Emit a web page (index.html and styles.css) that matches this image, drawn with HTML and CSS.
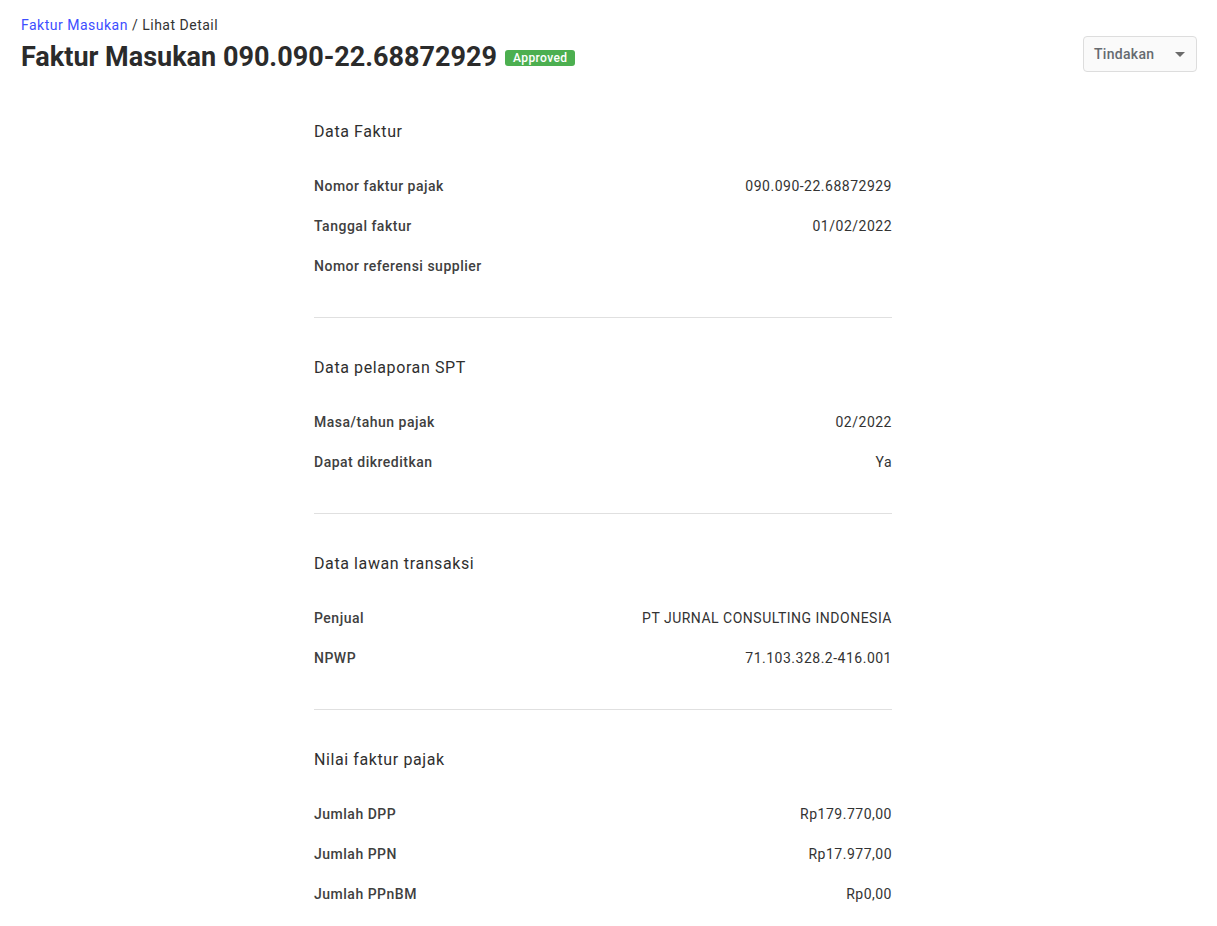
FILE: index.html
```html
<!DOCTYPE html>
<html lang="id">
<head>
    <meta charset="UTF-8">
    <title>Faktur Masukan - Lihat Detail</title>
    <link rel="stylesheet" href="styles.css">
</head>
<body>
<header class="page-header">
    <div class="heading">
        <div class="breadcrumb"><a href="#">Faktur Masukan</a> / Lihat Detail</div>
        <h1>Faktur Masukan 090.090-22.68872929 <span class="badge">Approved</span></h1>
    </div>
    <button type="button" class="action-btn">Tindakan <span class="caret"></span></button>
</header>

<main class="detail">
    <section class="section">
        <h2>Data Faktur</h2>
        <div class="row"><span class="label">Nomor faktur pajak</span><span class="value">090.090-22.68872929</span></div>
        <div class="row"><span class="label">Tanggal faktur</span><span class="value">01/02/2022</span></div>
        <div class="row"><span class="label">Nomor referensi supplier</span><span class="value"></span></div>
    </section>

    <section class="section">
        <h2>Data pelaporan SPT</h2>
        <div class="row"><span class="label">Masa/tahun pajak</span><span class="value">02/2022</span></div>
        <div class="row"><span class="label">Dapat dikreditkan</span><span class="value">Ya</span></div>
    </section>

    <section class="section">
        <h2>Data lawan transaksi</h2>
        <div class="row"><span class="label">Penjual</span><span class="value">PT JURNAL CONSULTING INDONESIA</span></div>
        <div class="row"><span class="label">NPWP</span><span class="value">71.103.328.2-416.001</span></div>
    </section>

    <section class="section last">
        <h2>Nilai faktur pajak</h2>
        <div class="row"><span class="label">Jumlah DPP</span><span class="value">Rp179.770,00</span></div>
        <div class="row"><span class="label">Jumlah PPN</span><span class="value">Rp17.977,00</span></div>
        <div class="row"><span class="label">Jumlah PPnBM</span><span class="value">Rp0,00</span></div>
    </section>
</main>
</body>
</html>
```

FILE: styles.css
```css
body {
    font-family: Roboto, 'Noto Sans', sans-serif;
    background-color: #ffffff;
    color: #333333;
    margin: 0;
    padding: 0;
}

.page-header {
    display: flex;
    justify-content: space-between;
    align-items: flex-start;
    padding: 15px 20px 0 21px;
}

.breadcrumb {
    font-size: 14px;
    line-height: 20px;
    letter-spacing: 0.5px;
    color: #333333;
}

.breadcrumb a {
    color: #3d4eff;
    text-decoration: none;
}

h1 {
    margin: 5px 0 0;
    font-size: 27px;
    line-height: 34px;
    font-weight: 700;
    color: #2b2b2b;
    display: flex;
    align-items: center;
    gap: 8px;
}

.badge {
    background-color: #4caf50;
    color: #ffffff;
    font-size: 12px;
    font-weight: 500;
    line-height: 16px;
    letter-spacing: 0.4px;
    padding: 0 8px;
    border-radius: 3px;
    margin-top: 1px;
}

.action-btn {
    margin-top: 21px;
    width: 114px;
    height: 36px;
    padding: 0 10px;
    display: flex;
    align-items: center;
    justify-content: space-between;
    background-color: #fafafa;
    border: 1px solid #dddddd;
    border-radius: 4px;
    font-family: inherit;
    font-size: 14px;
    font-weight: 500;
    letter-spacing: 0.3px;
    color: #666a70;
    cursor: pointer;
}

.caret {
    width: 0;
    height: 0;
    border-left: 5px solid transparent;
    border-right: 5px solid transparent;
    border-top: 5px solid #6b6b6b;
    margin-right: 1px;
}

.detail {
    width: 578px;
    margin: 8px auto 0 314px;
}

.section {
    padding: 40px 0 31px;
    border-bottom: 1px solid #e0e0e0;
}

.section.last {
    border-bottom: none;
}

h2 {
    margin: 0 0 24px;
    font-size: 16px;
    line-height: 20px;
    font-weight: 400;
    letter-spacing: 0.6px;
    color: #2f2f2f;
}

.row {
    display: flex;
    justify-content: space-between;
    align-items: center;
    height: 40px;
    font-size: 14px;
    letter-spacing: 0.5px;
}

.label {
    font-weight: 500;
    color: #404040;
}

.value {
    font-weight: 400;
}
```
